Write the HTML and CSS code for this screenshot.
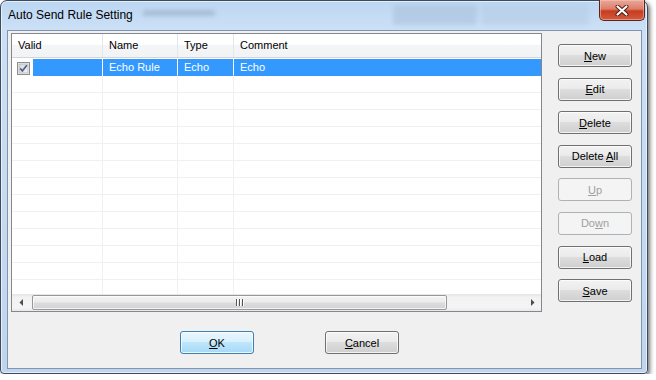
FILE: index.html
```html
<!DOCTYPE html>
<html lang="en">
<head>
    <meta charset="UTF-8">
    <title>Auto Send Rule Setting</title>
    <link rel="stylesheet" href="styles.css">
</head>
<body>
    <div class="window">
        <div class="titlebar">
            <div class="ghost">
                <span class="ghost-text"></span>
                <span class="ghost-btn one"></span>
                <span class="ghost-btn two"></span>
            </div>
            <span class="title">Auto Send Rule Setting</span>
            <button class="close">
                <svg width="14" height="11" viewBox="0 0 14 11">
                    <path d="M2.5 1.5 L11.5 9.5 M11.5 1.5 L2.5 9.5" stroke="#4a1a10" stroke-width="4" stroke-linecap="round"/>
                    <path d="M2.5 1.5 L11.5 9.5 M11.5 1.5 L2.5 9.5" stroke="#ffffff" stroke-width="2.2" stroke-linecap="round"/>
                </svg>
            </button>
        </div>
        <div class="client">
            <div class="main">
                <div class="list">
                    <div class="list-head">
                        <div class="col c-valid">Valid</div>
                        <div class="col c-name">Name</div>
                        <div class="col c-type">Type</div>
                        <div class="col c-comment">Comment</div>
                    </div>
                    <div class="list-body">
                        <div class="row selected">
                            <div class="cell c-valid">
                                <svg class="check" width="13" height="13" viewBox="0 0 13 13">
                                    <defs>
                                        <linearGradient id="cb" x1="0" y1="0" x2="1" y2="1">
                                            <stop offset="0" stop-color="#d6d6d6"/>
                                            <stop offset="1" stop-color="#f4f4f4"/>
                                        </linearGradient>
                                    </defs>
                                    <rect x="0.5" y="0.5" width="12" height="12" fill="#f4f4f4" stroke="#8e8f8f"/>
                                    <rect x="2" y="2" width="9" height="9" fill="url(#cb)" stroke="#b5b5b5" stroke-width="0.8"/>
                                    <path d="M3.2 6.4 L5.4 9 L9.8 3.2" fill="none" stroke="#4b5f91" stroke-width="1.7"/>
                                </svg>
                                <span class="sel-fill"></span>
                            </div>
                            <div class="cell c-name">Echo Rule</div>
                            <div class="cell c-type">Echo</div>
                            <div class="cell c-comment">Echo</div>
                        </div>
                        <div class="row"><div class="cell c-valid"></div><div class="cell c-name"></div><div class="cell c-type"></div><div class="cell c-comment"></div></div>
                        <div class="row"><div class="cell c-valid"></div><div class="cell c-name"></div><div class="cell c-type"></div><div class="cell c-comment"></div></div>
                        <div class="row"><div class="cell c-valid"></div><div class="cell c-name"></div><div class="cell c-type"></div><div class="cell c-comment"></div></div>
                        <div class="row"><div class="cell c-valid"></div><div class="cell c-name"></div><div class="cell c-type"></div><div class="cell c-comment"></div></div>
                        <div class="row"><div class="cell c-valid"></div><div class="cell c-name"></div><div class="cell c-type"></div><div class="cell c-comment"></div></div>
                        <div class="row"><div class="cell c-valid"></div><div class="cell c-name"></div><div class="cell c-type"></div><div class="cell c-comment"></div></div>
                        <div class="row"><div class="cell c-valid"></div><div class="cell c-name"></div><div class="cell c-type"></div><div class="cell c-comment"></div></div>
                        <div class="row"><div class="cell c-valid"></div><div class="cell c-name"></div><div class="cell c-type"></div><div class="cell c-comment"></div></div>
                        <div class="row"><div class="cell c-valid"></div><div class="cell c-name"></div><div class="cell c-type"></div><div class="cell c-comment"></div></div>
                        <div class="row"><div class="cell c-valid"></div><div class="cell c-name"></div><div class="cell c-type"></div><div class="cell c-comment"></div></div>
                        <div class="row"><div class="cell c-valid"></div><div class="cell c-name"></div><div class="cell c-type"></div><div class="cell c-comment"></div></div>
                        <div class="row"><div class="cell c-valid"></div><div class="cell c-name"></div><div class="cell c-type"></div><div class="cell c-comment"></div></div>
                        <div class="row"><div class="cell c-valid"></div><div class="cell c-name"></div><div class="cell c-type"></div><div class="cell c-comment"></div></div>
                    </div>
                    <div class="hscroll">
                        <div class="arrow">
                            <svg width="4" height="7" viewBox="0 0 4 7"><polygon points="4,0 4,7 0.5,3.5" fill="#4d4d4d"/></svg>
                        </div>
                        <div class="track">
                            <div class="thumb">
                                <svg width="8" height="7" viewBox="0 0 8 7">
                                    <rect x="0" y="0" width="1" height="7" fill="#555"/>
                                    <rect x="3" y="0" width="1" height="7" fill="#555"/>
                                    <rect x="6" y="0" width="1" height="7" fill="#555"/>
                                    <rect x="1" y="0" width="1" height="7" fill="#fff"/>
                                    <rect x="4" y="0" width="1" height="7" fill="#fff"/>
                                    <rect x="7" y="0" width="1" height="7" fill="#fff"/>
                                </svg>
                            </div>
                        </div>
                        <div class="arrow">
                            <svg width="4" height="7" viewBox="0 0 4 7"><polygon points="0,0 0,7 3.5,3.5" fill="#4d4d4d"/></svg>
                        </div>
                    </div>
                </div>
                <div class="side">
                    <button class="btn"><u>N</u>ew</button>
                    <button class="btn"><u>E</u>dit</button>
                    <button class="btn"><u>D</u>elete</button>
                    <button class="btn">Delete <u>A</u>ll</button>
                    <button class="btn" disabled><u>U</u>p</button>
                    <button class="btn" disabled>Do<u>w</u>n</button>
                    <button class="btn"><u>L</u>oad</button>
                    <button class="btn"><u>S</u>ave</button>
                </div>
            </div>
            <div class="footer">
                <button class="btn default"><u>O</u>K</button>
                <button class="btn"><u>C</u>ancel</button>
            </div>
        </div>
    </div>
</body>
</html>
```

FILE: styles.css
```css
body {
    margin: 0;
    background-color: #ffffff;
    font-family: 'Liberation Sans', Arial, sans-serif;
}
.window {
    box-sizing: border-box;
    width: 648px;
    height: 374px;
    border: 1px solid #3d4b5e;
    border-radius: 7px 7px 4px 4px;
    background: linear-gradient(to bottom, #bcd6f2 0, #cbe0f6 28px, #c4daf1 60%, #bfd5ee 100%);
    box-shadow: 2px 2px 4px rgba(0, 0, 0, 0.55), inset 0 0 0 1px rgba(255, 255, 255, 0.6);
    display: flex;
    flex-direction: column;
}
.titlebar {
    position: relative;
    height: 29px;
    display: flex;
    align-items: flex-start;
    flex-shrink: 0;
}
.ghost {
    position: absolute;
    left: 0;
    top: 0;
    right: 0;
    bottom: 0;
    filter: blur(2px);
    opacity: 0.5;
}
.ghost-text {
    position: absolute;
    left: 142px;
    top: 9px;
    width: 72px;
    height: 6px;
    background-color: #8fa3bb;
}
.ghost-btn {
    position: absolute;
    top: 4px;
    height: 20px;
    background-color: #a6bdd8;
    border-radius: 3px;
}
.ghost-btn.one {
    left: 392px;
    width: 84px;
}
.ghost-btn.two {
    left: 480px;
    width: 108px;
    background-color: #b4cae3;
}
.title {
    position: relative;
    padding: 6px 0 0 7px;
    font-size: 12px;
    line-height: 16px;
    color: #000;
}
.close {
    position: relative;
    margin: -1px 2px 0 auto;
    width: 46px;
    height: 21px;
    padding: 0;
    border: 1px solid #5a2419;
    border-top: none;
    border-radius: 0 0 5px 5px;
    background: linear-gradient(to bottom, #e9a99b 0, #dc7d69 45%, #c83c1f 55%, #d25b3f 100%);
    box-shadow: inset 0 0 0 1px rgba(255, 200, 190, 0.5);
    display: flex;
    align-items: center;
    justify-content: center;
}
.client {
    box-sizing: border-box;
    flex: 1;
    margin: 0 5px 4px 6px;
    border: 1px solid #8395ad;
    background-color: #f0f0f0;
    padding: 2px 9px 14px 3px;
    display: flex;
    flex-direction: column;
}
.main {
    display: flex;
    gap: 16px;
}
.list {
    box-sizing: border-box;
    width: 531px;
    height: 279px;
    border: 1px solid #828790;
    background-color: #fff;
    display: flex;
    flex-direction: column;
    font-size: 11px;
}
.list-head {
    box-sizing: border-box;
    height: 24px;
    display: flex;
    border-bottom: 1px solid #d5d5d5;
    background: linear-gradient(to bottom, #ffffff 0, #ffffff 45%, #f4f5f7 50%, #f2f3f5 100%);
}
.col {
    box-sizing: border-box;
    line-height: 23px;
    padding-left: 6px;
    border-right: 1px solid #e3e7ec;
    color: #000;
}
.c-valid {
    width: 91px;
}
.c-name {
    width: 75px;
}
.c-type {
    width: 56px;
}
.c-comment {
    flex: 1;
    border-right: none;
}
.list-body {
    flex: 1;
    padding-top: 1px;
    overflow: hidden;
}
.row {
    display: flex;
    height: 17px;
}
.cell {
    box-sizing: border-box;
    height: 17px;
    line-height: 16px;
    padding-left: 6px;
    border-right: 1px solid #f0f0f0;
    border-bottom: 1px solid #f0f0f0;
}
.cell.c-comment {
    border-right: none;
}
.row.selected .cell {
    background-color: #3399ff;
    color: #fff;
    border-bottom-color: #3399ff;
    border-right-color: #fff;
}
.row.selected .cell.c-valid {
    background-color: #fff;
    border-bottom: none;
    padding-left: 5px;
    display: flex;
    align-items: flex-start;
}
.check {
    margin-top: 3px;
    flex-shrink: 0;
}
.sel-fill {
    flex: 1;
    height: 17px;
    margin-left: 3px;
    background-color: #3399ff;
}
.hscroll {
    height: 17px;
    display: flex;
    background: linear-gradient(to bottom, #e4e4e4 0, #f2f2f2 20%, #f4f4f4 80%, #e9e9e9 100%);
    flex-shrink: 0;
}
.arrow {
    width: 17px;
    display: flex;
    align-items: center;
    justify-content: center;
}
.track {
    flex: 1;
    display: flex;
    align-items: center;
}
.thumb {
    box-sizing: border-box;
    width: 415px;
    height: 15px;
    margin-left: 3px;
    border: 1px solid #979797;
    border-radius: 2px;
    background: linear-gradient(to bottom, #f4f4f4 0, #ececec 45%, #dcdcdc 55%, #d2d2d2 100%);
    box-shadow: inset 0 0 0 1px rgba(255, 255, 255, 0.7);
    display: flex;
    align-items: center;
    justify-content: center;
}
.side {
    width: 74px;
    padding-top: 11px;
    display: flex;
    flex-direction: column;
    gap: 10.6px;
}
.btn {
    box-sizing: border-box;
    width: 74px;
    height: 23px;
    padding: 0;
    border: 1px solid #707070;
    border-radius: 3px;
    background: linear-gradient(to bottom, #f2f2f2 0, #ebebeb 45%, #dddddd 50%, #cfcfcf 100%);
    box-shadow: inset 0 0 0 1px rgba(255, 255, 255, 0.75);
    font-family: 'Liberation Sans', Arial, sans-serif;
    font-size: 11px;
    color: #000;
}
.btn:disabled {
    border-color: #adb2b5;
    background: #f4f4f4;
    box-shadow: none;
    color: #a0a0a0;
}
.btn.default {
    border-color: #3c7fb1;
    background: linear-gradient(to bottom, #eaf6fd 0, #d9f0fc 45%, #bee6fd 50%, #a7d9f5 100%);
}
.footer {
    display: flex;
    gap: 71px;
    margin-top: 19px;
    padding-left: 169px;
}
```
